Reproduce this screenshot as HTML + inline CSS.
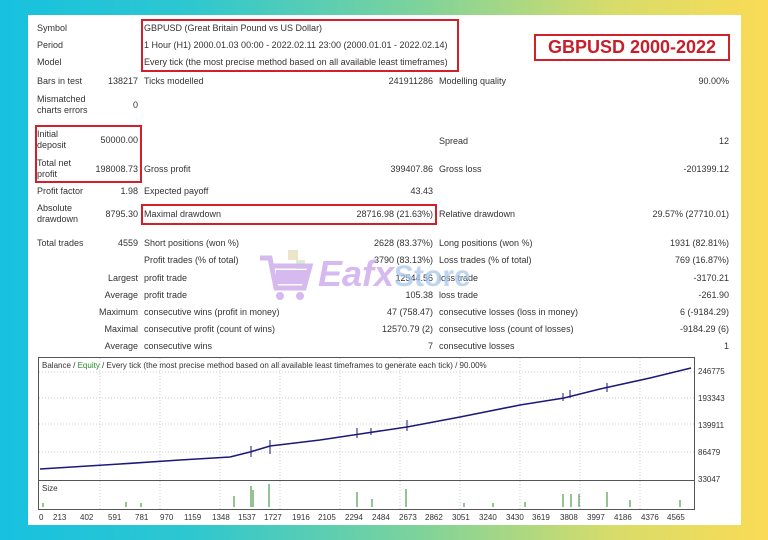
<!DOCTYPE html>
<html><head><meta charset="utf-8"><style>
*{margin:0;padding:0;box-sizing:border-box}
body{width:768px;height:540px;overflow:hidden;background:linear-gradient(90deg,#17c1df 0%,#2ec7d0 25%,#7fd39a 55%,#d8dc6a 80%,#fadb55 100%);font-family:"Liberation Sans",sans-serif;position:relative}
.card{position:absolute;left:28px;top:15px;width:713px;height:510px;background:#fff}
.t{position:absolute;font-size:9px;color:#333;white-space:nowrap;line-height:11px}
.r{text-align:right}
.box{position:absolute;border:2px solid #d0202a}
</style></head><body>
<div class="card"></div>
<div class="t" style="left:37px;top:23px">Symbol</div>
<div class="t" style="left:37px;top:40px">Period</div>
<div class="t" style="left:37px;top:57px">Model</div>
<div class="t" style="left:144px;top:23px">GBPUSD (Great Britain Pound vs US Dollar)</div>
<div class="t" style="left:144px;top:40px">1 Hour (H1) 2000.01.03 00:00 - 2022.02.11 23:00 (2000.01.01 - 2022.02.14)</div>
<div class="t" style="left:144px;top:57px">Every tick (the most precise method based on all available least timeframes)</div>
<div class="box" style="left:141px;top:19px;width:318px;height:53px"></div>
<div class="box" style="left:534px;top:34px;width:196px;height:27px"></div>
<div style="position:absolute;left:536px;top:36px;width:192px;height:23px;text-align:center;font:bold 18px/23px 'Liberation Sans',sans-serif;color:#c81e2a">GBPUSD 2000-2022</div>

<div class="t" style="left:37px;top:76px">Bars in test</div>
<div class="t r" style="left:80px;width:58px;top:76px">138217</div>
<div class="t" style="left:144px;top:76px">Ticks modelled</div>
<div class="t r" style="left:330px;width:103px;top:76px">241911286</div>
<div class="t" style="left:439px;top:76px">Modelling quality</div>
<div class="t r" style="left:620px;width:109px;top:76px">90.00%</div>

<div class="t" style="left:37px;top:94px">Mismatched<br>charts errors</div>
<div class="t r" style="left:80px;width:58px;top:100px">0</div>

<div class="t" style="left:37px;top:129px">Initial<br>deposit</div>
<div class="t r" style="left:80px;width:58px;top:135px">50000.00</div>
<div class="t" style="left:439px;top:136px">Spread</div>
<div class="t r" style="left:620px;width:109px;top:136px">12</div>

<div class="t" style="left:37px;top:158px">Total net<br>profit</div>
<div class="t r" style="left:80px;width:58px;top:164px">198008.73</div>
<div class="t" style="left:144px;top:164px">Gross profit</div>
<div class="t r" style="left:330px;width:103px;top:164px">399407.86</div>
<div class="t" style="left:439px;top:164px">Gross loss</div>
<div class="t r" style="left:620px;width:109px;top:164px">-201399.12</div>
<div class="box" style="left:35px;top:125px;width:107px;height:58px"></div>

<div class="t" style="left:37px;top:186px">Profit factor</div>
<div class="t r" style="left:80px;width:58px;top:186px">1.98</div>
<div class="t" style="left:144px;top:186px">Expected payoff</div>
<div class="t r" style="left:330px;width:103px;top:186px">43.43</div>

<div class="t" style="left:37px;top:203px">Absolute<br>drawdown</div>
<div class="t r" style="left:80px;width:58px;top:209px">8795.30</div>
<div class="t" style="left:144px;top:209px">Maximal drawdown</div>
<div class="t r" style="left:330px;width:103px;top:209px">28716.98 (21.63%)</div>
<div class="t" style="left:439px;top:209px">Relative drawdown</div>
<div class="t r" style="left:620px;width:109px;top:209px">29.57% (27710.01)</div>
<div class="box" style="left:141px;top:204px;width:296px;height:21px"></div>

<div class="t" style="left:37px;top:238px">Total trades</div>
<div class="t r" style="left:80px;width:58px;top:238px">4559</div>
<div class="t" style="left:144px;top:238px">Short positions (won %)</div>
<div class="t r" style="left:330px;width:103px;top:238px">2628 (83.37%)</div>
<div class="t" style="left:439px;top:238px">Long positions (won %)</div>
<div class="t r" style="left:620px;width:109px;top:238px">1931 (82.81%)</div>

<div class="t" style="left:144px;top:255px">Profit trades (% of total)</div>
<div class="t r" style="left:330px;width:103px;top:255px">3790 (83.13%)</div>
<div class="t" style="left:439px;top:255px">Loss trades (% of total)</div>
<div class="t r" style="left:620px;width:109px;top:255px">769 (16.87%)</div>

<div class="t r" style="left:60px;width:78px;top:273px">Largest</div>
<div class="t" style="left:144px;top:273px">profit trade</div>
<div class="t r" style="left:330px;width:103px;top:273px">12544.56</div>
<div class="t" style="left:439px;top:273px">loss trade</div>
<div class="t r" style="left:620px;width:109px;top:273px">-3170.21</div>

<div class="t r" style="left:60px;width:78px;top:290px">Average</div>
<div class="t" style="left:144px;top:290px">profit trade</div>
<div class="t r" style="left:330px;width:103px;top:290px">105.38</div>
<div class="t" style="left:439px;top:290px">loss trade</div>
<div class="t r" style="left:620px;width:109px;top:290px">-261.90</div>

<div class="t r" style="left:60px;width:78px;top:307px">Maximum</div>
<div class="t" style="left:144px;top:307px">consecutive wins (profit in money)</div>
<div class="t r" style="left:330px;width:103px;top:307px">47 (758.47)</div>
<div class="t" style="left:439px;top:307px">consecutive losses (loss in money)</div>
<div class="t r" style="left:620px;width:109px;top:307px">6 (-9184.29)</div>

<div class="t r" style="left:60px;width:78px;top:324px">Maximal</div>
<div class="t" style="left:144px;top:324px">consecutive profit (count of wins)</div>
<div class="t r" style="left:330px;width:103px;top:324px">12570.79 (2)</div>
<div class="t" style="left:439px;top:324px">consecutive loss (count of losses)</div>
<div class="t r" style="left:620px;width:109px;top:324px">-9184.29 (6)</div>

<div class="t r" style="left:60px;width:78px;top:341px">Average</div>
<div class="t" style="left:144px;top:341px">consecutive wins</div>
<div class="t r" style="left:330px;width:103px;top:341px">7</div>
<div class="t" style="left:439px;top:341px">consecutive losses</div>
<div class="t r" style="left:620px;width:109px;top:341px">1</div>

<!-- watermark -->
<svg style="position:absolute;left:258px;top:248px;opacity:.75" width="60" height="55" viewBox="0 0 60 55">
<rect x="30" y="2" width="10" height="10" fill="#e8dcb8"/><rect x="38" y="12" width="9" height="9" fill="#cfe6c5"/>
<path d="M2 10 H12 L18 40 H46 L52 18 H14" fill="none" stroke="#c9a3ea" stroke-width="5"/>
<rect x="18" y="22" width="30" height="14" fill="#c9a3ea"/>
<circle cx="22" cy="48" r="4" fill="#c9a3ea"/><circle cx="42" cy="48" r="4" fill="#c9a3ea"/></svg>
<div style="position:absolute;left:318px;top:252px;font:italic bold 36px/44px 'Liberation Sans',sans-serif;color:#c9a3ea;opacity:.75">Eafx<span style="color:#a9c8ee;font-style:normal;font-size:30px">Store</span></div>

<!-- chart -->
<svg style="position:absolute;left:0;top:0" width="768" height="540">
<rect x="38.5" y="357.5" width="656" height="123" fill="none" stroke="#555"/>
<rect x="38.5" y="480.5" width="656" height="29" fill="#fff" stroke="#555"/>
<g stroke="#ccc" stroke-dasharray="1,2">
<line x1="39" y1="398" x2="694" y2="398"/><line x1="39" y1="424" x2="694" y2="424"/><line x1="39" y1="452" x2="694" y2="452"/><line x1="39" y1="372" x2="694" y2="372"/>
<line x1="100" y1="358" x2="100" y2="509"/><line x1="160" y1="358" x2="160" y2="509"/><line x1="220" y1="358" x2="220" y2="509"/><line x1="280" y1="358" x2="280" y2="509"/><line x1="340" y1="358" x2="340" y2="509"/><line x1="400" y1="358" x2="400" y2="509"/><line x1="460" y1="358" x2="460" y2="509"/><line x1="520" y1="358" x2="520" y2="509"/><line x1="580" y1="358" x2="580" y2="509"/><line x1="640" y1="358" x2="640" y2="509"/>
</g>
<path d="M40 469 L120 464 L180 460 L230 457 L250 452 L270 446 L320 440 L360 434 L407 427 L460 417 L520 405 L564 398 L600 389 L650 378 L691 368" fill="none" stroke="#1a1a7a" stroke-width="1.6"/>
<g stroke="#1a1a7a" stroke-width="1"><line x1="251" y1="446" x2="251" y2="457"/><line x1="270" y1="440" x2="270" y2="454"/><line x1="357" y1="428" x2="357" y2="438"/><line x1="371" y1="428" x2="371" y2="435"/><line x1="407" y1="420" x2="407" y2="431"/><line x1="563" y1="393" x2="563" y2="401"/><line x1="570" y1="390" x2="570" y2="398"/><line x1="607" y1="383" x2="607" y2="392"/></g>
<g stroke="#2a8a2a" stroke-width="1">
<line x1="234" y1="496" x2="234" y2="507"/><line x1="251" y1="486" x2="251" y2="507"/><line x1="253" y1="490" x2="253" y2="507"/><line x1="269" y1="484" x2="269" y2="507"/><line x1="357" y1="492" x2="357" y2="507"/><line x1="372" y1="499" x2="372" y2="507"/><line x1="406" y1="489" x2="406" y2="507"/><line x1="563" y1="494" x2="563" y2="507"/><line x1="571" y1="494" x2="571" y2="507"/><line x1="579" y1="494" x2="579" y2="507"/><line x1="607" y1="492" x2="607" y2="507"/><line x1="630" y1="500" x2="630" y2="507"/><line x1="680" y1="500" x2="680" y2="507"/><line x1="43" y1="503" x2="43" y2="507"/><line x1="126" y1="502" x2="126" y2="507"/><line x1="141" y1="503" x2="141" y2="507"/><line x1="464" y1="503" x2="464" y2="507"/><line x1="493" y1="503" x2="493" y2="507"/><line x1="525" y1="502" x2="525" y2="507"/>
</g>
<g font-family="Liberation Sans" font-size="8" fill="#333">
<text x="42" y="368">Balance / <tspan fill="#2a8a2a">Equity</tspan> / Every tick (the most precise method based on all available least timeframes to generate each tick) / 90.00%</text>
<text x="42" y="491">Size</text>
<text x="698" y="374">246775</text><text x="698" y="401">193343</text><text x="698" y="428">139911</text><text x="698" y="455">86479</text><text x="698" y="482">33047</text>
<text y="520" x="39">0</text><text y="520" x="53">213</text><text y="520" x="80">402</text><text y="520" x="108">591</text><text y="520" x="135">781</text><text y="520" x="160">970</text><text y="520" x="184">1159</text><text y="520" x="212">1348</text><text y="520" x="238">1537</text><text y="520" x="264">1727</text><text y="520" x="292">1916</text><text y="520" x="318">2105</text><text y="520" x="345">2294</text><text y="520" x="372">2484</text><text y="520" x="399">2673</text><text y="520" x="425">2862</text><text y="520" x="452">3051</text><text y="520" x="479">3240</text><text y="520" x="506">3430</text><text y="520" x="532">3619</text><text y="520" x="560">3808</text><text y="520" x="587">3997</text><text y="520" x="614">4186</text><text y="520" x="641">4376</text><text y="520" x="667">4565</text>
</g>
</svg>
</body></html>
